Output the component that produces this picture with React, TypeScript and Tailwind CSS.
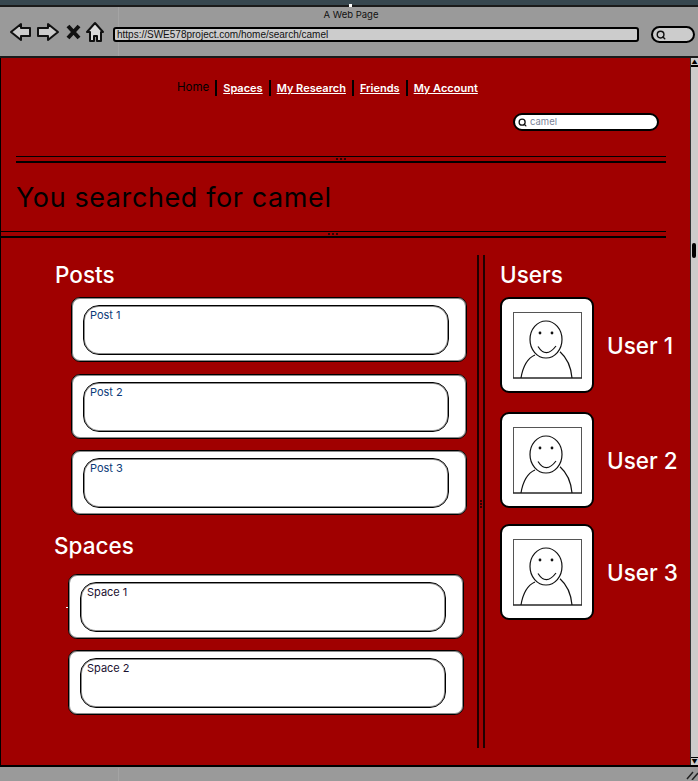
import { Search } from 'lucide-react';

const navLinks = ['Spaces', 'My Research', 'Friends', 'My Account'];
const posts = ['Post 1', 'Post 2', 'Post 3'];
const spaces = ['Space 1', 'Space 2'];
const users = [
    { name: 'User 1', spacing: 'mb-[19px]' },
    { name: 'User 2', spacing: 'mb-[16px]' },
    { name: 'User 3', spacing: '' },
];

function ChromeIcons() {
    return (
        <svg width="100" height="24" viewBox="0 0 100 24" className="shrink-0">
            <path d="M1 12 L11 4 V8 H20 V16 H11 V20 Z" fill="#ccc" stroke="#111" strokeWidth="2" strokeLinejoin="round" />
            <path d="M48 12 L38 4 V8 H28 V16 H38 V20 Z" fill="#ccc" stroke="#111" strokeWidth="2" strokeLinejoin="round" />
            <path d="M58 6 L69 18 M69 6 L58 18" stroke="#111" strokeWidth="4" />
            <path d="M85 3 L77 12 H80 V21 H84 V16 H87 V21 H91 V12 H93 Z" fill="#ddd" stroke="#111" strokeWidth="2" strokeLinejoin="round" />
        </svg>
    );
}

function Rule({ dotsClass }: { dotsClass: string }) {
    return (
        <div className="relative h-[7px] border-t border-b-2 border-black">
            <div className={`absolute top-[1px] flex gap-[2px] ${dotsClass}`}>
                <span className="h-[2px] w-[2px] bg-black/70" />
                <span className="h-[2px] w-[2px] bg-black/70" />
                <span className="h-[2px] w-[2px] bg-black/70" />
            </div>
        </div>
    );
}

function ResultCard({ label, textColor }: { label: string; textColor: string }) {
    return (
        <div className="h-[65px] rounded-[9px] border border-black bg-white pt-[7px] pl-[11px] pr-[17px] shadow-[inset_0_0_0_1px_rgba(0,0,0,0.45)]">
            <div className={`h-[50px] rounded-[16px] border border-black pl-[6px] pt-[2px] text-[11px] leading-[14px] shadow-[inset_0_0_0_1px_rgba(0,0,0,0.45)] ${textColor}`}>
                {label}
            </div>
        </div>
    );
}

function Avatar() {
    return (
        <div className="flex h-[96px] w-[94px] shrink-0 items-center justify-center rounded-[9px] border-2 border-black bg-white">
            <svg width="69" height="67" viewBox="0 0 69 67" fill="none" stroke="#111">
                <rect x="0.5" y="0.5" width="68" height="65.5" stroke="#555" />
                <path d="M0 66 H69" strokeWidth="1.2" />
                <path d="M8 66 C10 54 15 46 22 43 M47 39.7 C53 45 58 54 59 66" strokeWidth="1.2" />
                <ellipse cx="33" cy="27.5" rx="16" ry="18.5" strokeWidth="1.2" fill="#fff" />
                <circle cx="27" cy="21" r="1.4" fill="#111" stroke="none" />
                <circle cx="39" cy="21" r="1.4" fill="#111" stroke="none" />
                <path d="M25 34.5 Q33 47 43 34" strokeWidth="1.2" />
            </svg>
        </div>
    );
}

export default function App() {
    return (
        <div className="relative flex h-[781px] w-[698px] flex-col overflow-hidden bg-[#9a9a9a] font-['Inter',sans-serif] text-black">
            {/* browser chrome */}
            <div className="h-[5px] bg-[#37474f]" />
            <div className="h-[53px] border-y-2 border-[#1a1a1a]">
                <div className="pl-[4px] pt-[2px] text-center text-[9.5px] leading-[11px] text-[#111]">A Web Page</div>
                <div className="flex items-start pl-[10px]">
                    <ChromeIcons />
                    <div className="relative z-10 ml-[3px] mt-[7px] flex h-[15px] w-[526px] items-center rounded-[3px] border-2 border-black bg-[#ccc] pl-[2px] font-['Liberation_Sans',sans-serif] text-[10px] text-[#111]">
                        https://SWE578project.com/home/search/camel
                    </div>
                    <div className="ml-[12px] mt-[6px] flex h-[17px] w-[44px] items-center rounded-full border-2 border-black bg-[#ccc] pl-[3px]">
                        <Search size={10} strokeWidth={3.5} color="#111" />
                    </div>
                </div>
            </div>

            <div className="flex h-[707px]">
                {/* page */}
                <div className="w-[690px] shrink-0 border-l border-black bg-[#a00000]">
                    <nav className="mt-[21px] flex h-[18px] items-center pl-[176px] text-[11.5px]">
                        <span className="pr-[6px]">Home</span>
                        {navLinks.map((link) => (
                            <span key={link} className="flex h-[16px] items-center border-l-2 border-black px-[6px] text-[11px] font-semibold text-white underline">
                                {link}
                            </span>
                        ))}
                    </nav>
                    <div className="mt-[16px] flex justify-end pr-[31px]">
                        <div className="flex h-[18px] w-[146px] items-center gap-[3px] rounded-full border-2 border-black bg-white pl-[3px] text-[9.5px] text-[#7b8398]">
                            <Search size={9} strokeWidth={3.5} color="#111" />
                            camel
                        </div>
                    </div>

                    <div className="ml-[15px] mr-[24px] mt-[25px]">
                        <Rule dotsClass="left-[320px]" />
                    </div>
                    <h1 className="ml-[15px] h-[68px] pt-[18px] text-[27px] leading-[34px] tracking-[0.6px]">You searched for camel</h1>
                    <div className="mr-[24px]">
                        <Rule dotsClass="left-[327px]" />
                    </div>

                    <div className="mt-[17px] flex">
                        <div className="relative h-[493px] w-[484px] shrink-0 border-r-2 border-black/80">
                            <div className="absolute top-0 right-[4px] h-full w-[2px] bg-black/80" />
                            <div className="absolute top-[245px] right-[1px] flex flex-col gap-[1px]">
                                <span className="h-[2px] w-[2px] bg-black/70" />
                                <span className="h-[2px] w-[2px] bg-black/70" />
                                <span className="h-[2px] w-[2px] bg-black/70" />
                            </div>

                            <h2 className="ml-[54px] mt-[6px] text-[22.5px] leading-[28px] font-medium text-white">Posts</h2>
                            <div className="ml-[70px] mr-[16px] mt-[8px] flex flex-col gap-[11.5px]">
                                {posts.map((post) => (
                                    <ResultCard key={post} label={post} textColor="text-[#0b3a78]" />
                                ))}
                            </div>

                            <h2 className="ml-[53px] mt-[17px] text-[22.5px] leading-[28px] font-medium text-white">Spaces</h2>
                            <div className="relative ml-[67px] mr-[19px] mt-[14px] flex flex-col gap-[11px]">
                                <span className="absolute top-[33px] -left-[2px] h-px w-[2px] bg-white" />
                                {spaces.map((space) => (
                                    <ResultCard key={space} label={space} textColor="text-[#1a1030]" />
                                ))}
                            </div>
                        </div>

                        <div className="pl-[15px]">
                            <h2 className="mt-[6px] text-[22.5px] leading-[28px] font-medium text-white">Users</h2>
                            <div className="mt-[8px] flex flex-col">
                                {users.map((user) => (
                                    <div key={user.name} className={`flex items-center gap-[13px] ${user.spacing}`}>
                                        <Avatar />
                                        <span className="pt-[2px] text-[22.5px] font-medium text-white">{user.name}</span>
                                    </div>
                                ))}
                            </div>
                        </div>
                    </div>
                </div>

                {/* scrollbar */}
                <div className="flex flex-1 flex-col justify-between border-l border-[#333] bg-[#ccc]">
                    <div className="flex h-[9px] items-center justify-center border-b-2 border-black text-[6px] leading-none">▲</div>
                    <div className="h-[8px] border-t border-black text-center text-[6px] leading-[8px]">▼</div>
                </div>
            </div>

            <div className="flex-1 border-t-2 border-black" />
            <div className="absolute top-[243px] left-[692px] h-[15px] w-[4px] rounded-[2px] bg-black" />
            <div className="absolute top-[4px] left-[349px] h-[3px] w-[3px] bg-white" />
            <div className="absolute top-[7px] left-[118px] h-[49px] w-px bg-[#a4a4a4]" />
            <div className="absolute bottom-0 left-[118px] h-[13px] w-px bg-[#a4a4a4]" />
            <svg width="12" height="10" viewBox="0 0 12 10" className="absolute bottom-[1px] right-0" stroke="#222" strokeWidth="1.5">
                <path d="M1 9 L7 2 M6 10 L12 3" />
            </svg>
        </div>
    );
}
